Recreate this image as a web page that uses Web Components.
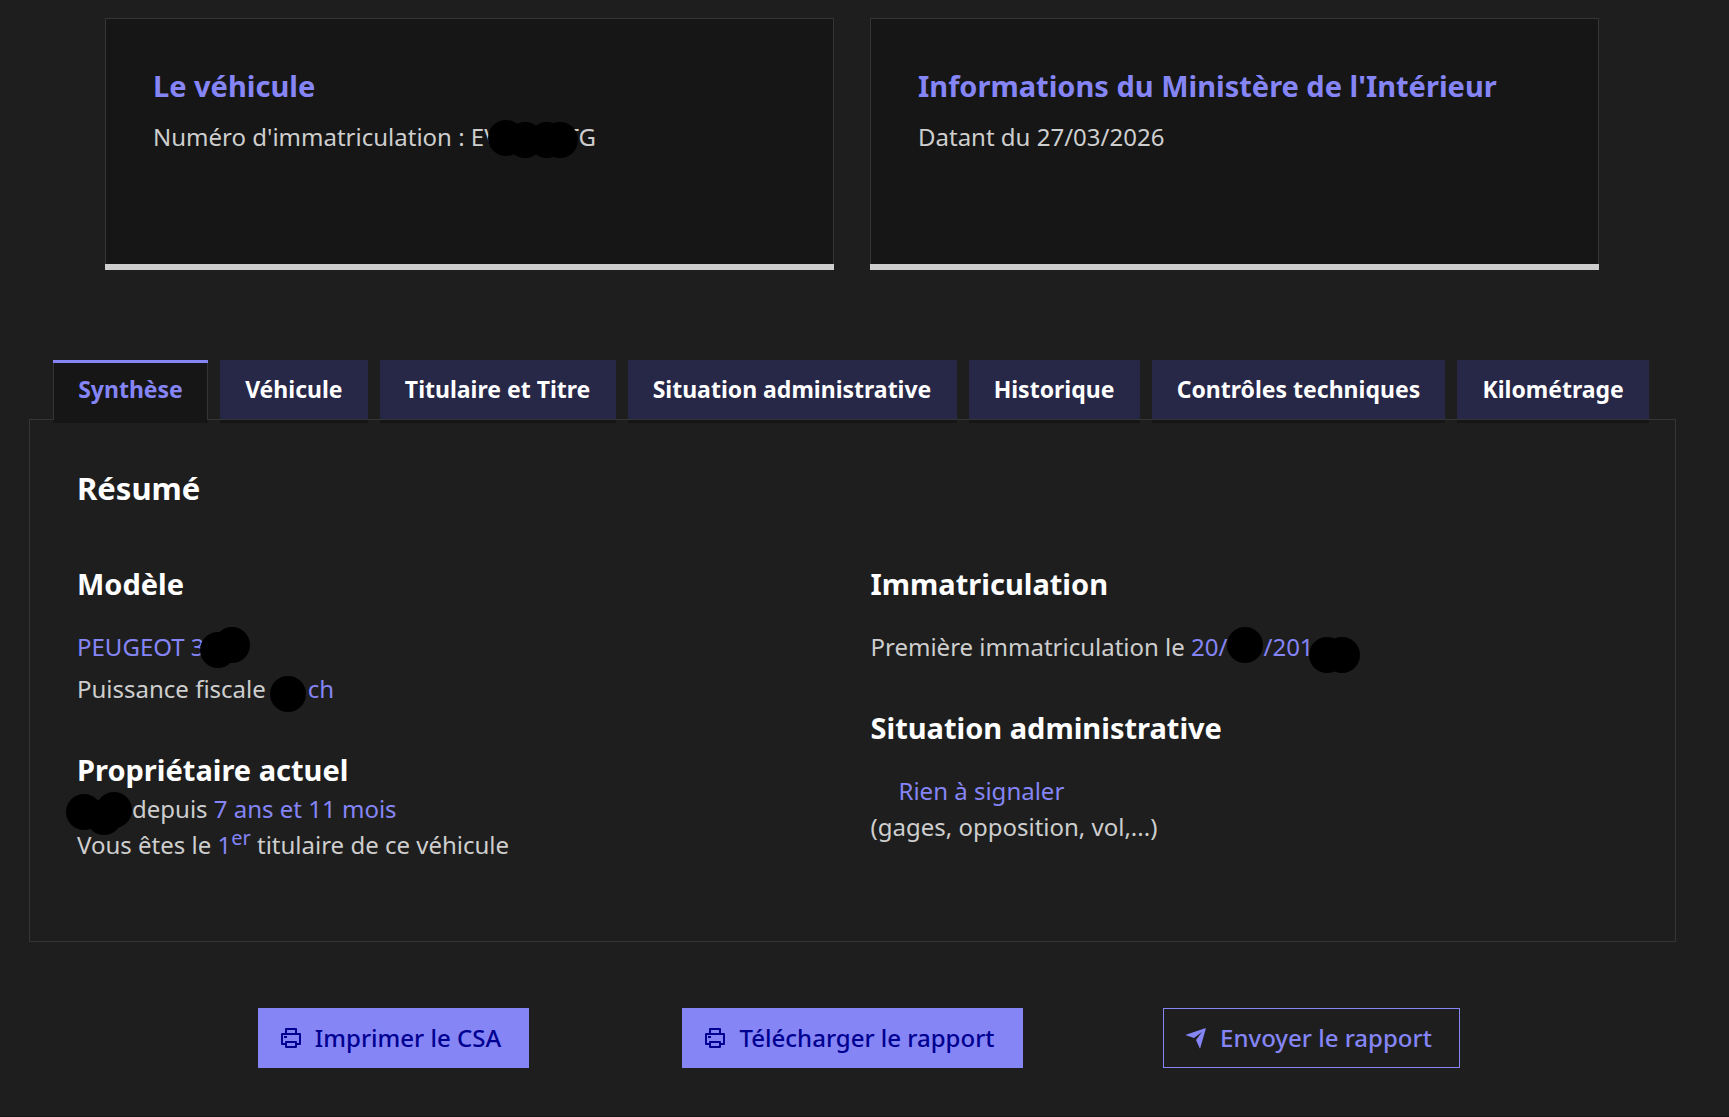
<!DOCTYPE html>
<html lang="fr">
<head>
<meta charset="utf-8">
<meta name="viewport" content="width=device-width, initial-scale=1">
<title>Rapport HistoVec</title>
<style>
    :root {
        --bg: #1e1e1e;
        --bg-card: #161616;
        --border: #353535;
        --text: #cecece;
        --title: #ffffff;
        --blue: #8585f6;
        --blue-dark: #000091;
        --tab: #272747;
    }
    body {
        margin: 0;
        background: var(--bg);
        color: var(--text);
        font: 24px/36px "Noto Sans", "Open Sans", sans-serif;
    }
</style>
</head>
<body>
<report-page></report-page>

<script>
class ReportPage extends HTMLElement {
    connectedCallback() {
        this.attachShadow({ mode: "open" });
        this.shadowRoot.innerHTML = `
            <style>
                :host {
                    display: block;
                    padding: 18px 53px 48px 29px;
                    border-bottom: 1px solid #161616;
                }
                .cards {
                    display: grid;
                    grid-template-columns: 1fr 1fr;
                    gap: 36px;
                    padding: 0 77px 0 76px;
                    margin-bottom: 90px;
                }
                .actions {
                    display: grid;
                    grid-template-columns: repeat(3, 1fr);
                    justify-items: center;
                    padding: 0 135px;
                    margin-top: 66px;
                }
                .columns {
                    display: grid;
                    grid-template-columns: 1fr 1fr;
                    gap: 36px;
                }
                h3, h4, p {
                    margin: 0;
                }
                h3, h4 {
                    color: var(--title);
                    font-weight: 700;
                }
                h3 {
                    font-size: 31px;
                    line-height: 42px;
                    margin-bottom: 54px;
                }
                h4 {
                    font-size: 29px;
                    line-height: 42px;
                }
                .gap {
                    margin-bottom: 24px;
                }
                .line {
                    margin-bottom: 6px;
                }
                .block {
                    margin-bottom: 42px;
                }
                .indent {
                    padding-left: 28px;
                }
                .blue {
                    color: var(--blue);
                }
                sup {
                    font-size: 20px;
                    line-height: 0;
                }
            </style>
            <div class="cards">
                <info-card>
                    <span slot="title">Le véhicule</span>
                    Numéro d'immatriculation : EV<redacted-text width="67" dots="-11,1 8,3 30,3 43,3"></redacted-text>TG
                </info-card>
                <info-card>
                    <span slot="title">Informations du Ministère de l'Intérieur</span>
                    Datant du 27/03/2026
                </info-card>
            </div>
            <report-tabs labels="Synthèse|Véhicule|Titulaire et Titre|Situation administrative|Historique|Contrôles techniques|Kilométrage">
                <h3>Résumé</h3>
                <div class="columns">
                    <div>
                        <h4 class="gap">Modèle</h4>
                        <p class="line blue">PEUGEOT 3<redacted-text width="40" dots="-5,3 9,-2"></redacted-text></p>
                        <p class="block">Puissance fiscale<redacted-text width="42" dots="4,5"></redacted-text><span class="blue">ch</span></p>
                        <h4>Propriétaire actuel</h4>
                        <p><redacted-text width="55" dots="-11,3 9,8 19,1"></redacted-text>depuis <span class="blue">7 ans et 11 mois</span></p>
                        <p>Vous êtes le <span class="blue">1<sup>er</sup></span> titulaire de ce véhicule</p>
                    </div>
                    <div>
                        <h4 class="gap">Immatriculation</h4>
                        <p class="block">Première immatriculation le <span class="blue">20/<redacted-text width="36" dots="0,-2"></redacted-text>/201<redacted-text width="40" dots="-5,8 10,8"></redacted-text></span></p>
                        <h4 class="gap">Situation administrative</h4>
                        <p class="indent blue">Rien à signaler</p>
                        <p>(gages, opposition, vol,...)</p>
                    </div>
                </div>
            </report-tabs>
            <div class="actions">
                <action-button icon="print">Imprimer le CSA</action-button>
                <action-button icon="print">Télécharger le rapport</action-button>
                <action-button icon="send" outline>Envoyer le rapport</action-button>
            </div>
        `;
    }
}

class InfoCard extends HTMLElement {
    connectedCallback() {
        this.attachShadow({ mode: "open" });
        this.shadowRoot.innerHTML = `
            <style>
                :host {
                    display: flex;
                    flex-direction: column;
                    min-height: 252px;
                    background: var(--bg-card);
                }
                .body {
                    flex: 1;
                    padding: 46px 47px;
                    border: 1px solid var(--border);
                    border-bottom: 0;
                }
                .bar {
                    height: 6px;
                    background: var(--text);
                }
                h2 {
                    margin: 0 0 12px;
                    color: var(--blue);
                    font-size: 29px;
                    line-height: 42px;
                    font-weight: 700;
                }
                p {
                    margin: 0;
                }
            </style>
            <div class="body">
                <h2><slot name="title"></slot></h2>
                <p><slot></slot></p>
            </div>
            <div class="bar"></div>
        `;
    }
}

// black dots over private data, dots="x,y x,y" from the top left of the gap
class RedactedText extends HTMLElement {
    connectedCallback() {
        const dots = this.getAttribute("dots").split(" ").map(dot => {
            const [x, y] = dot.split(",");
            return `<i style="left: ${x}px; top: ${y}px"></i>`;
        });
        this.attachShadow({ mode: "open" });
        this.shadowRoot.innerHTML = `
            <style>
                :host {
                    display: inline-block;
                    position: relative;
                    width: ${this.getAttribute("width")}px;
                    height: 36px;
                    vertical-align: top;
                }
                i {
                    position: absolute;
                    width: 36px;
                    height: 36px;
                    border-radius: 50%;
                    background: #000;
                }
            </style>
            ${dots.join("")}
        `;
    }
}

class ReportTabs extends HTMLElement {
    connectedCallback() {
        const labels = this.getAttribute("labels").split("|");
        this.attachShadow({ mode: "open" });
        this.shadowRoot.innerHTML = `
            <style>
                :host {
                    display: block;
                }
                .list {
                    display: flex;
                    gap: 12px;
                    padding: 0 27px 0 24px;
                }
                button {
                    position: relative;
                    flex: 1 1 auto;
                    height: 60px;
                    margin: 0 0 -1px;
                    padding: 0 0 2px;
                    border: 0;
                    border-bottom: 1px solid var(--border);
                    background: var(--tab);
                    box-shadow: 0 3px 0 var(--bg-card);
                    color: var(--title);
                    font: inherit;
                    font-size: 23px;
                    font-weight: 700;
                    white-space: nowrap;
                    cursor: pointer;
                }
                button[aria-selected="true"] {
                    padding: 0 0 5px;
                    background: var(--bg-card);
                    color: var(--blue);
                    box-shadow: inset 1px 0 var(--border), inset -1px 0 var(--border), 0 3px 0 var(--bg-card);
                    border-top: 3px solid var(--blue);
                    border-bottom: 0;
                }
                .panel {
                    padding: 47px 47px 78px;
                    border: 1px solid var(--border);
                }
            </style>
            <div class="list" role="tablist">
                ${labels.map((label, i) => `<button role="tab" aria-selected="${i == 0}">${label}</button>`).join("")}
            </div>
            <div class="panel" role="tabpanel"><slot></slot></div>
        `;
        const tabs = this.shadowRoot.querySelectorAll("button");
        tabs.forEach(tab => {
            tab.addEventListener("click", () => {
                tabs.forEach(x => x.setAttribute("aria-selected", x == tab));
            });
        });
    }
}

const ICONS = {
    print: "M6 19H3a1 1 0 0 1-1-1V8a1 1 0 0 1 1-1h3V3a1 1 0 0 1 1-1h10a1 1 0 0 1 1 1v4h3a1 1 0 0 1 1 1v10a1 1 0 0 1-1 1h-3v2a1 1 0 0 1-1 1H7a1 1 0 0 1-1-1v-2zm0-2v-1a1 1 0 0 1 1-1h10a1 1 0 0 1 1 1v1h2V9H4v8h2zM8 4v3h8V4H8zm0 13v3h8v-3H8zm-3-7h3v2H5v-2z",
    send: "M1.946 9.315c-.522-.174-.527-.455.01-.634l19.087-6.362c.529-.176.832.12.684.638l-5.454 19.086c-.15.529-.455.547-.679.045L12 14l6-8-8 6-8.054-2.685z"
};

class ActionButton extends HTMLElement {
    connectedCallback() {
        this.attachShadow({ mode: "open" });
        this.shadowRoot.innerHTML = `
            <style>
                :host {
                    display: block;
                }
                button {
                    display: flex;
                    align-items: center;
                    gap: 12px;
                    height: 60px;
                    padding: 0 28px 0 21px;
                    border: 0;
                    background: var(--blue);
                    color: var(--blue-dark);
                    font: inherit;
                    font-weight: 500;
                    cursor: pointer;
                }
                :host([outline]) button {
                    background: transparent;
                    color: var(--blue);
                    box-shadow: inset 0 0 0 1px var(--blue);
                }
                svg {
                    width: 24px;
                    height: 24px;
                    fill: currentColor;
                }
            </style>
            <button>
                <svg viewBox="0 0 24 24" aria-hidden="true"><path d="${ICONS[this.getAttribute("icon")]}"/></svg>
                <slot></slot>
            </button>
        `;
    }
}

customElements.define("info-card", InfoCard);
customElements.define("redacted-text", RedactedText);
customElements.define("report-tabs", ReportTabs);
customElements.define("action-button", ActionButton);
customElements.define("report-page", ReportPage);
</script>
</body>
</html>
